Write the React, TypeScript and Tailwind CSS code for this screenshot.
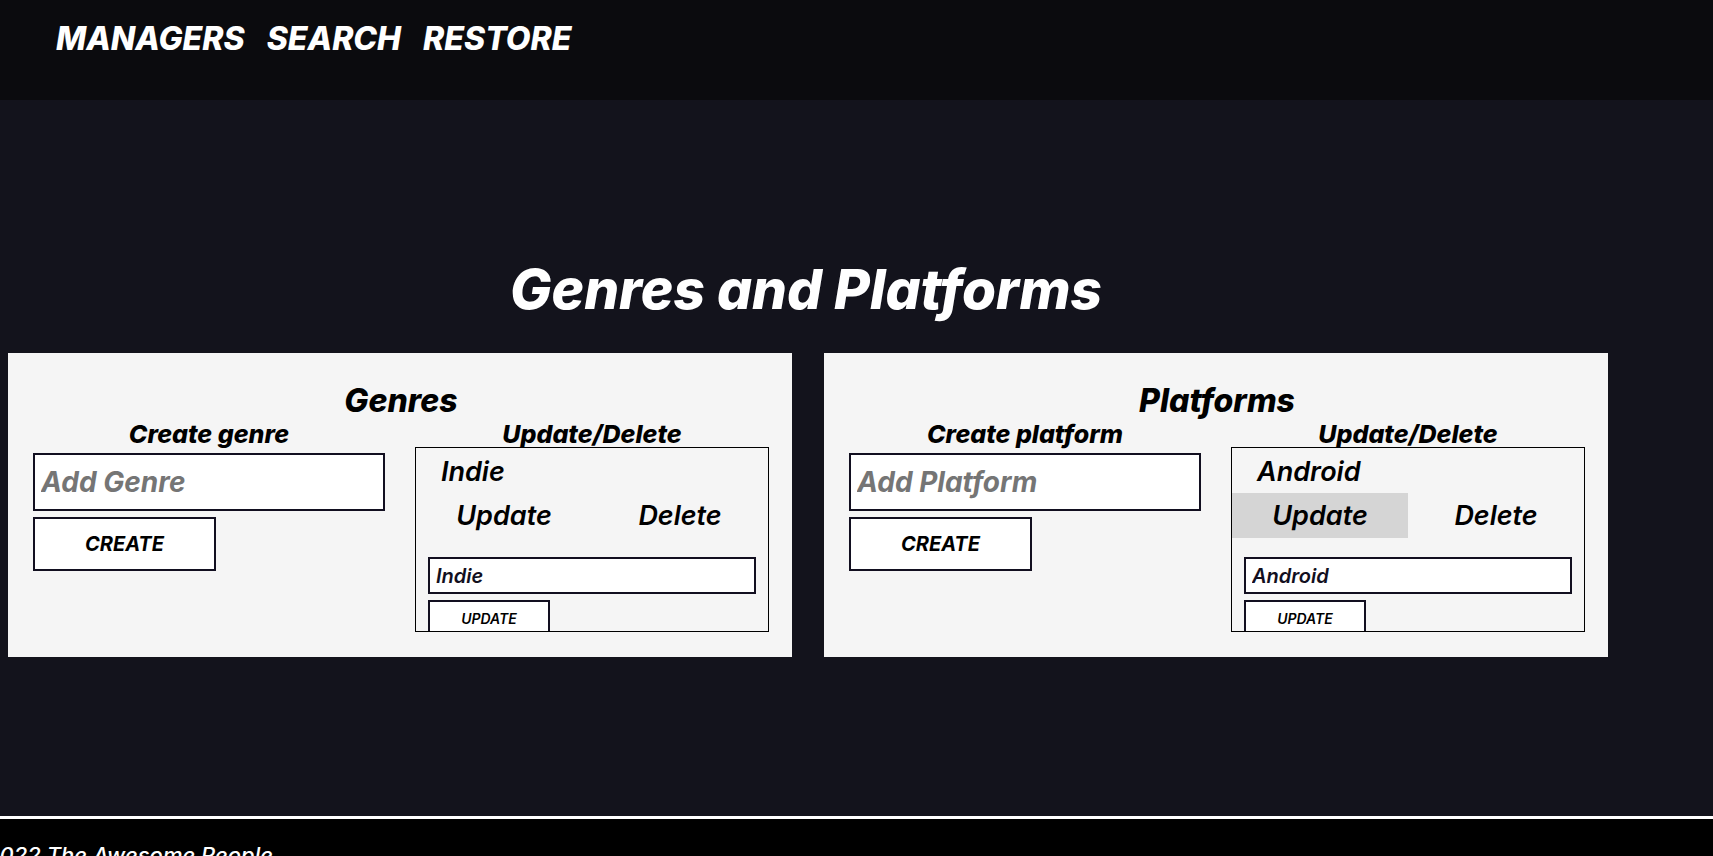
type ManagerProps = {
  id: string;
  title: string;
  noun: string;
  item: string;
  active?: boolean;
};

const navItems = ["MANAGERS", "SEARCH", "RESTORE"];

function ManagerCard({ id, title, noun, item, active = false }: ManagerProps) {
  return (
    <section className="bg-[#f5f5f5] pt-7 pr-[23px] pb-[25px] pl-[25px] text-black">
      <h2 className="text-center text-[32px] leading-10 font-extrabold">{title}</h2>
      <div className="grid grid-cols-[352fr_354fr] gap-[30px]">
        <form className="flex flex-col items-start" onSubmit={(e) => e.preventDefault()}>
          <label htmlFor={`${id}-new`} className="mb-1.5 w-full text-center text-[25px] leading-[26px] font-extrabold">
            Create {noun.toLowerCase()}
          </label>
          <input
            id={`${id}-new`}
            placeholder={`Add ${noun}`}
            className="mb-1.5 h-[58px] w-full border-2 border-[#120f20] bg-white px-1.5 text-[28px] font-bold italic outline-none placeholder:text-[#757575]"
          />
          <button className="h-[54px] w-[183px] border-2 border-[#120f20] bg-white text-xl font-bold italic">
            CREATE
          </button>
        </form>
        <div>
          <h3 className="text-center text-[25px] leading-[26px] font-extrabold">Update/Delete</h3>
          <div className="h-[185px] overflow-hidden border border-black">
            <p className="px-[25px] pt-[7px] pb-[5px] text-[27px] leading-[33px] font-semibold">{item}</p>
            <div className="grid grid-cols-2 text-[27px] font-semibold">
              <button className={active ? "h-[45px] bg-[#d5d5d5] pt-0.5 italic" : "h-[45px] pt-0.5 italic"}>Update</button>
              <button className="h-[45px] pt-0.5 italic">Delete</button>
            </div>
            <form className="flex flex-col items-start px-3 pt-[19px]" onSubmit={(e) => e.preventDefault()}>
              <input
                aria-label={`${noun} name`}
                defaultValue={item}
                className="mb-1.5 h-[37px] w-full border-2 border-[#120f20] bg-white px-1.5 text-xl font-semibold text-[#120f20] italic outline-none"
              />
              <button className="h-[37px] w-[122px] border-2 border-[#120f20] bg-white text-sm font-semibold italic">
                UPDATE
              </button>
            </form>
          </div>
        </div>
      </div>
    </section>
  );
}

export default function App() {
  return (
    <div className="flex h-screen flex-col overflow-hidden bg-[#13131c] font-['Inter','Liberation_Sans',sans-serif] text-white italic">
      <header className="h-[100px] shrink-0 bg-[#0b0b0e] px-14 pt-4">
        <nav className="flex gap-[22px] text-[32px] leading-[46px] font-extrabold">
          {navItems.map((name) => (
            <a key={name} href="#">
              {name}
            </a>
          ))}
        </nav>
      </header>
      <main className="flex-1 pt-[153px] pr-[105px] pl-2">
        <h1 className="mb-[27px] pr-1 text-center text-[55px] leading-[73px] font-extrabold">Genres and Platforms</h1>
        <div className="grid grid-cols-2 gap-8">
          <ManagerCard id="genre" title="Genres" noun="Genre" item="Indie" />
          <ManagerCard id="platform" title="Platforms" noun="Platform" item="Android" active />
        </div>
      </main>
      <footer className="h-10 shrink-0 overflow-hidden border-t-[3px] border-white bg-black pt-5">
        <p className="-ml-10 text-[22px] leading-8 font-medium whitespace-nowrap">© 2022 The Awesome People</p>
      </footer>
    </div>
  );
}
